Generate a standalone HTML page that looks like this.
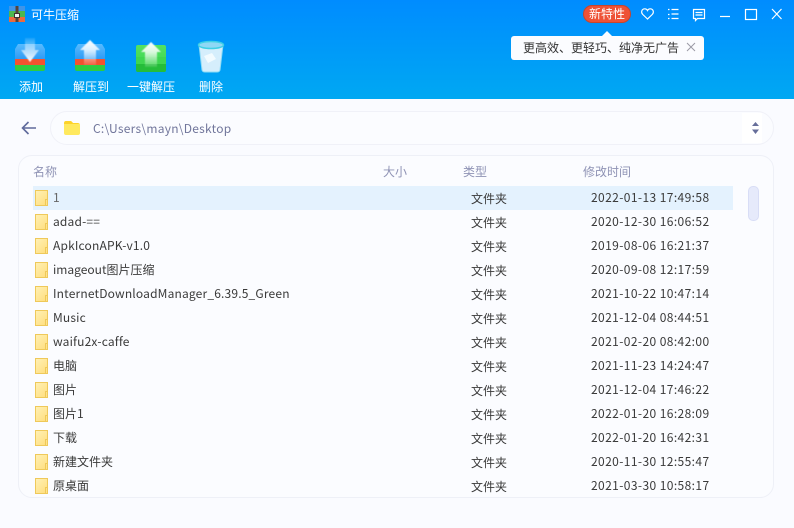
<!DOCTYPE html>
<html lang="zh"><head><meta charset="utf-8"><style>
html,body{margin:0;padding:0}
body{width:794px;height:528px;overflow:hidden;position:relative;background:#fafbff;font-family:"Liberation Sans","Noto Sans CJK SC",sans-serif;font-size:12px;color:#444}
.a{position:absolute;white-space:nowrap}
#top{left:0;top:0;width:794px;height:99px;background:linear-gradient(#008cff,#00a8f2)}
.tb{color:#fff;top:79px;line-height:16px;text-align:center;width:70px;font-size:12px;font-family:"Noto Sans CJK SC",sans-serif}
.path{left:50px;top:111px;width:722px;height:32px;border:1px solid #f0f1f8;border-radius:17px;background:#fbfcff}
.panel{left:18px;top:155px;width:754px;height:341px;border:1px solid #eef0f7;border-radius:14px;background:#fbfcff}
.h{top:164px;line-height:16px;color:#8f93b5;font-family:"Noto Sans CJK SC",sans-serif}
.f{left:35px;width:11px;height:14px;background:linear-gradient(135deg,#fff0b4,#ffde7e);border:1px solid #efc95a}
.f:after{content:"";position:absolute;right:-1px;bottom:-1px;width:1px;height:5px;border:1px solid #efc95a;background:#ffe38c}
.n,.t,.d{line-height:16px;color:#3a3a3a;font-family:"Noto Sans CJK SC",sans-serif}
.n{left:53px}.t{left:471px}.d{left:591px;margin-top:-1px;letter-spacing:.4px}
.l{letter-spacing:.17px}
</style></head><body>
<div class="a" id="top"></div>

<svg class="a" style="left:9px;top:6px" width="16" height="16"><rect width="16" height="5" fill="#3f94e8"/><rect y="5" width="16" height="6" fill="#4cb84f"/><rect y="11" width="16" height="5" fill="#ec6a3e"/><rect x="6.500" width="3" height="16" fill="#54423a"/><rect x="5.500" y="7.500" width="5" height="4" fill="#f2f2f2" stroke="#3a3330" stroke-width="1"/></svg>
<div class="a" style="left:31px;top:6px;color:#fff;font-size:12px;line-height:17px;font-family:'Noto Sans CJK SC',sans-serif">可牛压缩</div>

<!-- window controls -->
<div class="a" style="left:583px;top:5px;width:48px;height:18px;border-radius:10px;background:#ee5236;border:1px solid #c9442c;box-sizing:border-box;color:#fff;text-align:center;line-height:16px;font-size:12px;font-family:'Noto Sans CJK SC',sans-serif">新特性</div>
<svg class="a" style="left:640px;top:6px" width="154" height="18" fill="none" stroke="#fff" stroke-width="1.2">
<path d="M7.500 13 L2.800 8.500 C0.500 6 2 2.800 4.800 2.800 C6 2.800 7 3.500 7.500 4.500 C8 3.500 9 2.800 10.200 2.800 C13 2.800 14.500 6 12.200 8.500 Z"/>
<path d="M28 3.500h1.500M28 8.500h1.500M28 12.500h1.500M31.500 3.500h7M31.500 8h7M31.500 12.500h7"/>
<path d="M53.500 3.500h11v9h-7l-2 2v-2h-2zM55.500 6.500h7M55.500 9h7"/>
<path d="M80 10.500h10"/>
<rect x="105.500" y="3.500" width="11" height="10"/>
<path d="M132 3l9.500 10M141.500 3l-9.500 10"/>
</svg>

<!-- tooltip -->
<div class="a" style="left:511px;top:36px;width:193px;height:24px;background:#fbfcff;border-radius:3px"></div>
<div class="a" style="left:602px;top:31px;width:0;height:0;border-left:5px solid transparent;border-right:5px solid transparent;border-bottom:5px solid #fbfcff"></div>
<div class="a" style="left:523px;top:39px;line-height:17px;color:#333;font-size:12px;font-family:'Noto Sans CJK SC',sans-serif">更高效、更轻巧、纯净无广告</div>
<svg class="a" style="left:686px;top:42px" width="10" height="10" fill="none" stroke="#9a9aa5"><path d="M1 1l8 8M9 1l-8 8"/></svg>

<!-- toolbar icons -->
<svg class="a" style="left:0;top:36px" width="240" height="40">
<defs>
<linearGradient id="g1" x1="0" y1="0" x2="0" y2="1"><stop offset="0" stop-color="#58bbff"/><stop offset="1" stop-color="#2f9bf5"/></linearGradient>
<linearGradient id="ar" x1="0" y1="0" x2="0" y2="1"><stop offset="0" stop-color="#fff" stop-opacity=".1"/><stop offset="1" stop-color="#fff"/></linearGradient>
<linearGradient id="au" x1="0" y1="1" x2="0" y2="0"><stop offset="0" stop-color="#fff" stop-opacity=".1"/><stop offset=".6" stop-color="#fff" stop-opacity=".8"/><stop offset="1" stop-color="#fff"/></linearGradient>
<linearGradient id="gg" x1="0" y1="0" x2="0" y2="1"><stop offset="0" stop-color="#54e262"/><stop offset="1" stop-color="#35d24a"/></linearGradient>
<filter id="b" x="-20%" y="-20%" width="140%" height="140%"><feGaussianBlur stdDeviation=".5"/></filter>
</defs>
<!-- add -->
<path d="M18 8h24l3 5v10H15V13z" fill="url(#g1)"/><rect x="15" y="23" width="30" height="6" fill="#f2522f"/><path d="M15 29h30v4q0 2-2 2H17q-2 0-2-2z" fill="#2ecc40"/>
<path d="M25 2h10v12h4L30 26 21 14h4z" fill="url(#ar)" filter="url(#b)"/>
<!-- extract to -->
<path d="M78 8h24l3 5v10H75V13z" fill="url(#g1)"/><rect x="75" y="23" width="30" height="6" fill="#f2522f"/><path d="M75 29h30v4q0 2-2 2H77q-2 0-2-2z" fill="#2ecc40"/>
<path d="M90 4l10 10h-4v15H84V14h-4z" fill="url(#au)" filter="url(#b)"/>
<!-- one key -->
<path d="M138 9h26q2 0 2 2v23q0 2-2 2h-26q-2 0-2-2V11q0-2 2-2z" fill="url(#gg)"/><path d="M136 28h30v6q0 2-2 2h-26q-2 0-2-2z" fill="#25bd3a"/><rect x="136" y="21" width="30" height="7" fill="#3fd650"/>
<path d="M151 6l10 10h-4v15h-12V16h-4z" fill="url(#au)" filter="url(#b)"/>
<!-- delete -->
<path d="M199 9h24l-3 25q-.5 2-3 2h-12q-2.500 0-3-2z" fill="#d5eefc" stroke="#8fdcf5"/>
<path d="M204 20l8-3 4 6-8 4z" fill="#f2fbff"/>
<ellipse cx="211" cy="9" rx="12.500" ry="3.500" fill="#8fd8f5" stroke="#3fd0e6" stroke-width="1.500"/>
</svg>
<div class="a tb" style="left:-4px">添加</div>
<div class="a tb" style="left:56px">解压到</div>
<div class="a tb" style="left:116px">一键解压</div>
<div class="a tb" style="left:176px">删除</div>

<!-- path bar -->
<svg class="a" style="left:20px;top:120px" width="18" height="16" fill="none" stroke="#5f6a9c" stroke-width="1.600"><path d="M16 8H2.500M8.500 2 2.500 8l6 6"/></svg>
<div class="a path"></div>
<svg class="a" style="left:64px;top:121px" width="16" height="14"><path d="M0 2q0-2 2-2h5l2 2h5q2 0 2 2v8q0 2-2 2H2q-2 0-2-2z" fill="#ffe95e"/><path d="M0 3q0-3 2-3h5l2 2h5l1.500 1z" fill="#fdd22a"/></svg>
<div class="a" style="left:93px;top:121px;line-height:16px;color:#71769b;font-size:12px;letter-spacing:.25px;font-family:'Noto Sans CJK SC',sans-serif">C:\Users\mayn\Desktop</div>
<div class="a" style="left:742px;top:113px;width:20px;height:30px;background:#fff"></div>
<svg class="a" style="left:752px;top:121px" width="8" height="14" fill="#666e9a"><path d="M3.500 1 7 5H0zM0 8.500h7l-3.500 4.500z"/></svg>

<!-- panel -->
<div class="a panel"></div>
<div class="a h" style="left:33px">名称</div>
<div class="a h" style="left:383px">大小</div>
<div class="a h" style="left:463px">类型</div>
<div class="a h" style="left:583px">修改时间</div>
<div class="a" style="left:33px;top:186px;width:700px;height:24px;background:#e4f2fe"></div>
<div class="a" style="left:748px;top:186px;width:9px;height:33px;background:#e6eafb;border:1px solid #d8ddf6;border-radius:5px"></div>

<div class="a f" style="top:190px"></div><div class="a n" style="top:190px;color:#666">1</div><div class="a t" style="top:191px">文件夹</div><div class="a d" style="top:191px">2022-01-13 17:49:58</div>
<div class="a f" style="top:214px"></div><div class="a n l" style="top:214px">adad-==</div><div class="a t" style="top:215px">文件夹</div><div class="a d" style="top:215px">2020-12-30 16:06:52</div>
<div class="a f" style="top:238px"></div><div class="a n l" style="top:238px">ApkIconAPK-v1.0</div><div class="a t" style="top:239px">文件夹</div><div class="a d" style="top:239px">2019-08-06 16:21:37</div>
<div class="a f" style="top:262px"></div><div class="a n" style="top:262px">imageout图片压缩</div><div class="a t" style="top:263px">文件夹</div><div class="a d" style="top:263px">2020-09-08 12:17:59</div>
<div class="a f" style="top:286px"></div><div class="a n l" style="top:286px">InternetDownloadManager_6.39.5_Green</div><div class="a t" style="top:287px">文件夹</div><div class="a d" style="top:287px">2021-10-22 10:47:14</div>
<div class="a f" style="top:310px"></div><div class="a n l" style="top:310px">Music</div><div class="a t" style="top:311px">文件夹</div><div class="a d" style="top:311px">2021-12-04 08:44:51</div>
<div class="a f" style="top:334px"></div><div class="a n l" style="top:334px">waifu2x-caffe</div><div class="a t" style="top:335px">文件夹</div><div class="a d" style="top:335px">2021-02-20 08:42:00</div>
<div class="a f" style="top:358px"></div><div class="a n" style="top:358px">电脑</div><div class="a t" style="top:359px">文件夹</div><div class="a d" style="top:359px">2021-11-23 14:24:47</div>
<div class="a f" style="top:382px"></div><div class="a n" style="top:382px">图片</div><div class="a t" style="top:383px">文件夹</div><div class="a d" style="top:383px">2021-12-04 17:46:22</div>
<div class="a f" style="top:406px"></div><div class="a n" style="top:406px">图片1</div><div class="a t" style="top:407px">文件夹</div><div class="a d" style="top:407px">2022-01-20 16:28:09</div>
<div class="a f" style="top:430px"></div><div class="a n" style="top:430px">下载</div><div class="a t" style="top:431px">文件夹</div><div class="a d" style="top:431px">2022-01-20 16:42:31</div>
<div class="a f" style="top:454px"></div><div class="a n" style="top:454px">新建文件夹</div><div class="a t" style="top:455px">文件夹</div><div class="a d" style="top:455px">2020-11-30 12:55:47</div>
<div class="a f" style="top:478px"></div><div class="a n" style="top:478px">原桌面</div><div class="a t" style="top:479px">文件夹</div><div class="a d" style="top:479px">2021-03-30 10:58:17</div>
</body></html>
